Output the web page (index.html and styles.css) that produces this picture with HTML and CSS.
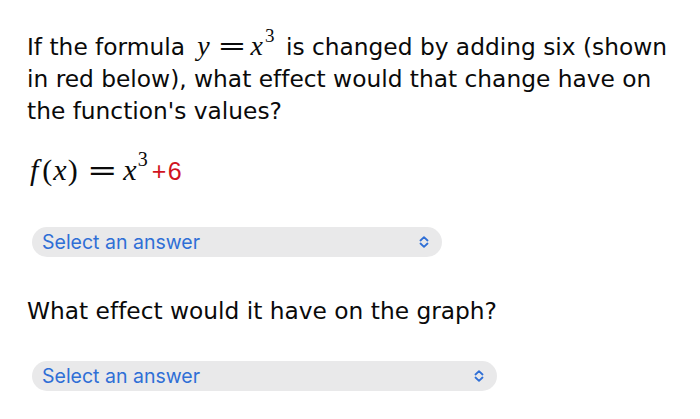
FILE: index.html
```html
<!DOCTYPE html>
<html>
<head>
<meta charset="utf-8">
<link rel="stylesheet" href="styles.css">
</head>
<body>
<main class="page">
  <p class="question">If the formula <span class="math m1"><i>y</i><span class="op">=</span><i>x</i><sup>3</sup></span> is changed by adding six (shown in red below), what effect would that change have on the function's values?</p>
  <p class="formula"><span class="math m2"><i class="f">f</i><span class="par">(</span><i>x</i><span class="par">)</span><span class="op">=</span><i>x</i><sup>3</sup></span><span class="red">+6</span></p>
  <div class="select select-1">
    <span class="select-text">Select an answer</span>
    <svg class="chev" width="10" height="12" viewBox="0 0 10 12"><path d="M1.5 4.5 L5 1.2 L8.5 4.5 M1.5 7.5 L5 10.8 L8.5 7.5" fill="none" stroke="#2f6fd6" stroke-width="1.8" stroke-linecap="round" stroke-linejoin="round"/></svg>
  </div>
  <p class="question q2">What effect would it have on the graph?</p>
  <div class="select select-2">
    <span class="select-text">Select an answer</span>
    <svg class="chev" width="10" height="12" viewBox="0 0 10 12"><path d="M1.5 4.5 L5 1.2 L8.5 4.5 M1.5 7.5 L5 10.8 L8.5 7.5" fill="none" stroke="#2f6fd6" stroke-width="1.8" stroke-linecap="round" stroke-linejoin="round"/></svg>
  </div>
</main>
</body>
</html>
```
FILE: styles.css
```css
html, body {
  margin: 0;
  padding: 0;
  background: #ffffff;
}
.page {
  display: flex;
  flex-direction: column;
  align-items: flex-start;
  padding: 30px 0 0 27px;
  font-family: "DejaVu Sans", Verdana, sans-serif;
  font-variant-ligatures: none;
  color: #0a0a0a;
}
.question {
  margin: 0;
  font-size: 23.3px;
  line-height: 32px;
  width: 655px;
}
.math {
  font-family: "Liberation Serif", "DejaVu Serif", serif;
  line-height: 32px;
}
.math i {
  font-style: italic;
}
.math .op {
  display: inline-block;
  font-family: "DejaVu Serif", serif;
  font-style: normal;
  transform: scaleX(1.35);
}
.math sup {
  line-height: 0;
  font-style: normal;
}
.m1 {
  font-size: 28px;
  margin-left: 5px;
}
.m1 .op {
  font-size: 26px;
  margin: 0 8px 0 11px;
}
.m1 sup {
  font-size: 19px;
  vertical-align: 13px;
  margin: 0 4px 0 2px;
}
.m2 {
  font-size: 30px;
}
.m2 .f {
  padding: 0 3px 0 3px;
}
.m2 .par {
  padding: 0 1px;
}
.m2 .op {
  font-size: 27px;
  margin: 0 10px 0 12px;
}
.m2 sup {
  font-size: 20px;
  vertical-align: 14px;
  margin: 0 4px 0 1px;
}
.formula {
  margin: 27px 0 0 0;
  font-size: 23px;
  line-height: 32px;
}
.red {
  color: #d0141f;
  font-family: "Liberation Sans", Arial, sans-serif;
  font-size: 25px;
  letter-spacing: 1.5px;
}
.select {
  margin-left: 5px;
  height: 30px;
  border-radius: 15px;
  background: #e9e9ea;
  display: flex;
  align-items: center;
  justify-content: space-between;
  padding: 0 13px 0 10px;
  box-sizing: border-box;
}
.select-1 {
  width: 410px;
  margin-top: 39px;
}
.select-2 {
  width: 465px;
  margin-top: 34px;
}
.select-text {
  font-family: Inter, "Noto Sans", sans-serif;
  font-size: 19.5px;
  color: #2f6fd6;
}
.chev {
  display: block;
}
.q2 {
  margin-top: 38px;
  width: auto;
}
```
